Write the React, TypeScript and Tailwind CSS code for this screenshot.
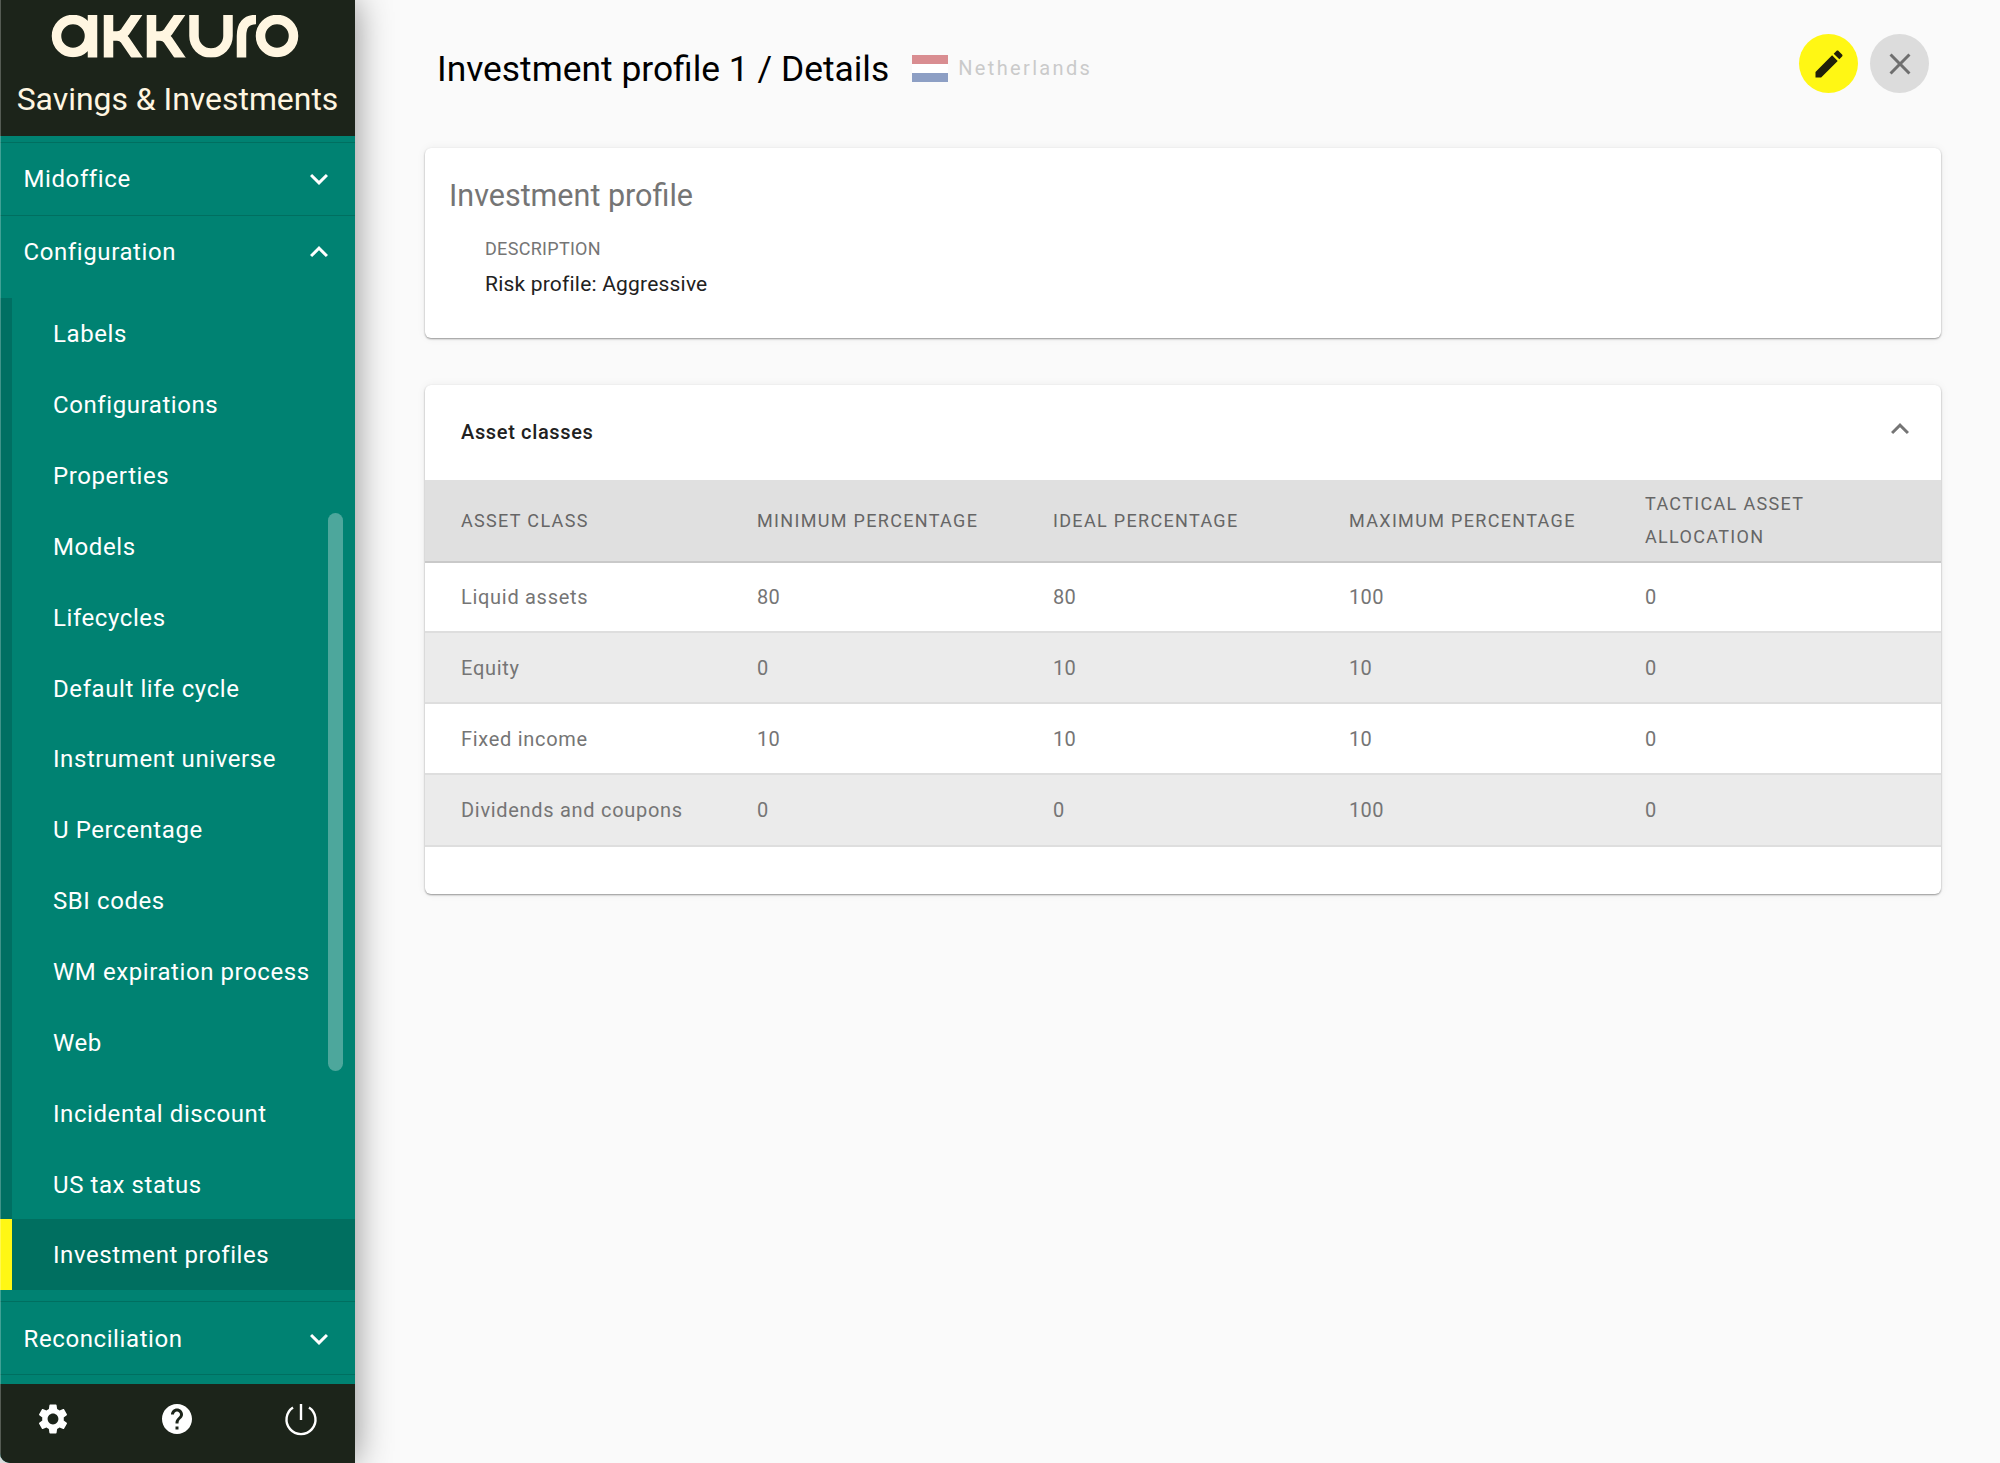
import React from "react";

const Icon = ({ d, className }: { d: string; className?: string }) => (
  <svg viewBox="0 0 24 24" fill="currentColor" className={className}>
    <path d={d} />
  </svg>
);

const DOWN = "M7.41 8.59 12 13.17l4.59-4.58L18 10l-6 6-6-6 1.41-1.41z";
const UP = "M7.41 15.41 12 10.83l4.59 4.58L18 14l-6-6-6 6 1.41 1.41z";
const PENCIL = "M3 17.25V21h3.75L17.81 9.94l-3.75-3.75L3 17.25zM20.71 7.04c.39-.39.39-1.02 0-1.41l-2.34-2.34c-.39-.39-1.02-.39-1.41 0l-1.83 1.83 3.75 3.75 1.83-1.83z";
const CLOSE = "M19 6.41 17.59 5 12 10.59 6.41 5 5 6.41 10.59 12 5 17.59 6.41 19 12 13.41 17.59 19 19 17.59 13.41 12z";
const HELP = "M12 2C6.48 2 2 6.48 2 12s4.48 10 10 10 10-4.48 10-10S17.52 2 12 2zm1 17h-2v-2h2v2zm2.07-7.75-.9.92C13.45 12.9 13 13.5 13 15h-2v-.5c0-1.1.45-2.1 1.17-2.83l1.24-1.26c.37-.36.59-.86.59-1.41 0-1.1-.9-2-2-2s-2 .9-2 2H8c0-2.21 1.79-4 4-4s4 1.79 4 4c0 .88-.36 1.68-.93 2.25z";
const GEAR = "M19.14 12.94c.04-.3.06-.61.06-.94 0-.32-.02-.64-.07-.94l2.03-1.58c.18-.14.23-.41.12-.61l-1.92-3.32c-.12-.22-.37-.29-.59-.22l-2.39.96c-.5-.38-1.03-.7-1.62-.94l-.36-2.54c-.04-.24-.24-.41-.48-.41h-3.84c-.24 0-.43.17-.47.41l-.36 2.54c-.59.24-1.13.57-1.62.94l-2.39-.96c-.22-.08-.47 0-.59.22L2.74 8.87c-.12.21-.08.47.12.61l2.03 1.58c-.05.3-.09.63-.09.94s.02.64.07.94l-2.03 1.58c-.18.14-.23.41-.12.61l1.92 3.32c.12.22.37.29.59.22l2.39-.96c.5.38 1.03.7 1.62.94l.36 2.54c.05.24.24.41.48.41h3.84c.24 0 .44-.17.47-.41l.36-2.54c.59-.24 1.13-.56 1.62-.94l2.39.96c.22.08.47 0 .59-.22l1.92-3.32c.12-.22.07-.47-.12-.61l-2.01-1.58zM12 15.6c-1.98 0-3.6-1.62-3.6-3.6s1.62-3.6 3.6-3.6 3.6 1.62 3.6 3.6-1.62 3.6-3.6 3.6z";

const Logo = () => (
  <svg viewBox="0 0 355 60" className="block w-[355px] h-[60px]" fill="none" stroke="#fff6e1" strokeWidth="9.5">
    <defs>
      <clipPath id="logoclip">
        <rect x="0" y="15" width="355" height="42.5" />
      </clipPath>
    </defs>
    <g clipPath="url(#logoclip)">
      <circle cx="73" cy="36" r="16.5" />
      <path d="M92.5 10V62" />
      <path d="M108.5 10V62" />
      <path d="M112 36H117Q122 36 125 32L140 10M117 36Q122 36 125 40L140 62" />
      <path d="M151.5 10V62" />
      <path d="M155 36H160Q165 36 168 32L183 10M160 36Q165 36 168 40L183 62" />
      <path d="M194 10V36A17 17 0 0 0 228 36V10" />
      <path d="M241.5 62V36Q241.5 19.5 256 19.5" />
      <circle cx="277" cy="36" r="16.5" />
    </g>
  </svg>
);

const subItems = [
  "Labels",
  "Configurations",
  "Properties",
  "Models",
  "Lifecycles",
  "Default life cycle",
  "Instrument universe",
  "U Percentage",
  "SBI codes",
  "WM expiration process",
  "Web",
  "Incidental discount",
  "US tax status",
];

const Section = ({ label, up, low }: { label: string; up?: boolean; low?: boolean }) => (
  <div className="h-[72px] shrink-0 flex items-center justify-between pl-[23.5px] pr-[18px] text-white text-[24px] tracking-[0.6px]">
    <span className={low ? "pt-[2px]" : ""}>{label}</span>
    <Icon d={up ? UP : DOWN} className={low ? "w-[36px] h-[36px] mt-[2px]" : "w-[36px] h-[36px]"} />
  </div>
);

const Sidebar = () => (
  <aside className="w-[355px] shrink-0 h-[1463px] flex flex-col bg-[#008272] rounded-bl-[10px] overflow-hidden relative z-10 shadow-[0_0_36px_rgba(0,0,0,0.45)]">
    <div className="h-[136px] shrink-0 bg-[#1c241a] flex flex-col items-center">
      <Logo />
      <div className="text-[#fff6e1] text-[31.9px] leading-[38px] mt-[20px] whitespace-nowrap">Savings &amp; Investments</div>
    </div>
    <div className="h-[7px] shrink-0 border-b border-[#006f60]" />
    <div className="border-b border-[#006f60]">
      <Section label="Midoffice" />
    </div>
    <Section label="Configuration" up />
    <div className="h-[10px] shrink-0" />
    <div className="relative flex flex-col shrink-0">
      <div className="flex flex-col border-l-[12px] border-[#006f62]">
        {subItems.map((s) => (
          <div key={s} className="h-[70.85px] shrink-0 flex items-center pl-[41px] pt-[2px] text-white text-[24px] tracking-[0.58px] whitespace-nowrap">
            {s}
          </div>
        ))}
      </div>
      <div className="h-[71px] shrink-0 flex items-center border-l-[12px] border-[#fff714] bg-[#006f60] pl-[41px] pt-[2px] text-white text-[24px] tracking-[0.58px]">
        Investment profiles
      </div>
      <div className="absolute left-[328px] top-[215px] w-[15px] h-[558px] rounded-full bg-[rgba(255,255,255,0.3)]" />
    </div>
    <div className="h-[12px] shrink-0 border-b border-[#006f60]" />
    <div className="border-b border-[#006f60]">
      <Section label="Reconciliation" low />
    </div>
    <div className="flex-1" />
    <div className="h-[79px] shrink-0 bg-[#1c241a] flex items-start pt-[17px] text-white">
      <div className="w-[118px] flex justify-center">
        <Icon d={GEAR} className="w-[36px] h-[36px] -ml-[12px]" />
      </div>
      <div className="w-[118px] flex justify-center">
        <Icon d={HELP} className="w-[36px] h-[36px]" />
      </div>
      <div className="w-[118px] flex justify-center">
        <svg viewBox="0 0 36 36" className="w-[36px] h-[36px] ml-[12px]" fill="none" stroke="currentColor" strokeWidth="2.4">
          <path d="M18 3V19" />
          <path d="M10 6.5A14.5 14.5 0 1 0 26 6.5" />
        </svg>
      </div>
    </div>
    <div className="absolute left-0 top-0 bottom-0 w-[1px] bg-white/25" />
  </aside>
);

const rows = [
  ["Liquid assets", "80", "80", "100", "0"],
  ["Equity", "0", "10", "10", "0"],
  ["Fixed income", "10", "10", "10", "0"],
  ["Dividends and coupons", "0", "0", "100", "0"],
];
const heads = ["ASSET CLASS", "MINIMUM PERCENTAGE", "IDEAL PERCENTAGE", "MAXIMUM PERCENTAGE", "TACTICAL ASSET ALLOCATION"];
const rowH = ["h-[70px]", "h-[71px]", "h-[71px]", "h-[72px]"];

export default function App() {
  return (
    <div className="flex w-[2000px] h-[1463px] overflow-hidden bg-[#fafafa] font-['Roboto',sans-serif]">
      <Sidebar />
      <main className="flex-1 pl-[70px] pr-[59px]">
        <header className="h-[148px] flex items-start justify-between">
          <div className="flex items-center mt-[46px] ml-[12px]">
            <h1 className="text-[35.4px] leading-[46px] text-black">Investment profile 1 / Details</h1>
            <div className="w-[36px] h-[27px] ml-[23px] -mt-[2px] flex flex-col">
              <div className="flex-1 bg-[#d98d91]" />
              <div className="flex-1 bg-white" />
              <div className="flex-1 bg-[#8d9fc4]" />
            </div>
            <span className="ml-[10px] -mt-[2px] text-[20px] tracking-[2.35px] text-[#cacaca]">Netherlands</span>
          </div>
          <div className="flex gap-[12px] mt-[34px] mr-[12px]">
            <div className="w-[59px] h-[59px] rounded-full bg-[#fff714] flex items-center justify-center text-[#211f0a]">
              <Icon d={PENCIL} className="w-[36px] h-[36px]" />
            </div>
            <div className="w-[59px] h-[59px] rounded-full bg-[#dcdcdc] flex items-center justify-center text-[#6f6f6f]">
              <Icon d={CLOSE} className="w-[36px] h-[36px]" />
            </div>
          </div>
        </header>

        <section className="h-[190px] bg-white rounded-[6px] shadow-[0_1px_2px_rgba(0,0,0,0.4),0_0_10px_rgba(0,0,0,0.06)] pl-[24px] pt-[28px]">
          <h2 className="text-[30.5px] leading-[40px] text-[#757575]">Investment profile</h2>
          <div className="pl-[36px] mt-[20px]">
            <div className="text-[18px] leading-[26px] tracking-[0.3px] text-[#757575]">DESCRIPTION</div>
            <div className="text-[21px] leading-[28px] mt-[8px] tracking-[0.2px] text-[#212121]">Risk profile: Aggressive</div>
          </div>
        </section>

        <section className="mt-[47px] h-[509px] bg-white rounded-[6px] shadow-[0_1px_2px_rgba(0,0,0,0.4),0_0_10px_rgba(0,0,0,0.06)] overflow-hidden">
          <div className="h-[95px] flex items-center justify-between pl-[36px] pr-[23px]">
            <span className="text-[20px] font-medium text-[#212121] tracking-[0.65px] -mt-[2px]">Asset classes</span>
            <Icon d={UP} className="w-[36px] h-[36px] text-[#757575] -mt-[8px]" />
          </div>
          <table className="w-full table-fixed border-collapse">
            <colgroup>
              <col className="w-[296px]" />
              <col className="w-[296px]" />
              <col className="w-[296px]" />
              <col className="w-[296px]" />
              <col className="w-[332px]" />
            </colgroup>
            <thead>
              <tr className="h-[82px] bg-[#e0e0e0] border-b-2 border-[#c9c9c9]">
                {heads.map((h) => (
                  <th key={h} className="pl-[36px] pr-[24px] pb-[1px] text-left font-normal text-[18px] leading-[33px] tracking-[1.33px] text-[#666666]">
                    {h}
                  </th>
                ))}
              </tr>
            </thead>
            <tbody>
              {rows.map((r, i) => (
                <tr key={r[0]} className={`${rowH[i]} ${i % 2 ? "bg-[#ebebeb]" : "bg-white"} border-b-2 border-[#dedede]`}>
                  {r.map((c, j) => (
                    <td key={j} className={`pl-[36px] text-[20px] text-[#757575] whitespace-nowrap ${j === 0 ? "tracking-[0.7px]" : "tracking-[0.35px]"}`}>
                      {c}
                    </td>
                  ))}
                </tr>
              ))}
            </tbody>
          </table>
        </section>
      </main>
    </div>
  );
}
